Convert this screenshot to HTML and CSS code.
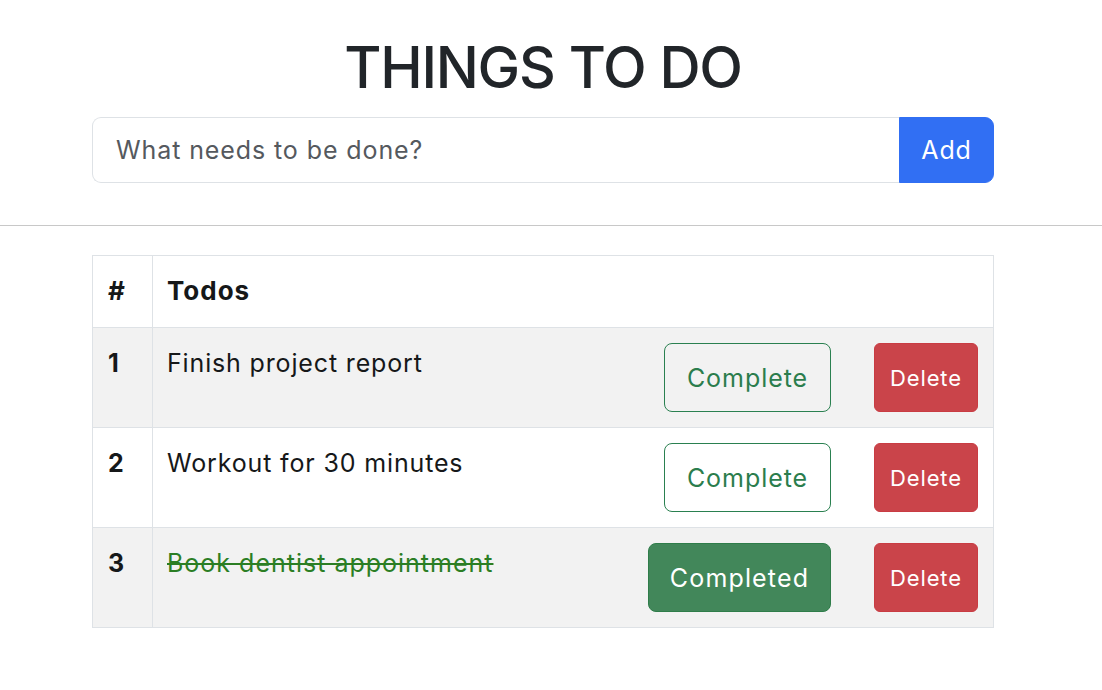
FILE: index.html
```html
<!DOCTYPE html>
<html lang="en">
<head>
<meta charset="utf-8">
<title>Things to do</title>
<link rel="stylesheet" href="styles.css">
</head>
<body>
<header class="top">
  <h1 class="title">THINGS TO DO</h1>
  <form class="add-form">
    <input class="add-input" type="text" placeholder="What needs to be done?">
    <button class="add-btn" type="button">Add</button>
  </form>
</header>
<hr class="divider">
<table class="todos">
  <thead>
    <tr><th class="num">#</th><th class="head-todos">Todos</th></tr>
  </thead>
  <tbody>
    <tr class="odd">
      <td class="num">1</td>
      <td><div class="todo-cell"><span class="todo-text">Finish project report</span><div class="actions"><button class="btn-complete" type="button">Complete</button><button class="btn-delete" type="button">Delete</button></div></div></td>
    </tr>
    <tr>
      <td class="num">2</td>
      <td><div class="todo-cell"><span class="todo-text">Workout for 30 minutes</span><div class="actions"><button class="btn-complete" type="button">Complete</button><button class="btn-delete" type="button">Delete</button></div></div></td>
    </tr>
    <tr class="odd">
      <td class="num">3</td>
      <td><div class="todo-cell"><span class="todo-text done">Book dentist appointment</span><div class="actions"><button class="btn-completed" type="button">Completed</button><button class="btn-delete" type="button">Delete</button></div></div></td>
    </tr>
  </tbody>
</table>
</body>
</html>
```

FILE: styles.css
```css
* { box-sizing: border-box; }

body {
  margin: 0;
  font-family: Inter, "Liberation Sans", sans-serif;
  color: #212529;
  background: #fff;
  font-size: 25px;
  letter-spacing: 0.85px;
}

.top {
  width: 902px;
  margin-left: 92px;
  padding-top: 34px;
}

.title {
  margin: 0;
  text-align: center;
  font-size: 57px;
  font-weight: 500;
  line-height: 68px;
  letter-spacing: -1.2px;
  color: #212529;
}

.add-form {
  display: flex;
  height: 66px;
  margin: 15px 0 0;
}

.add-input {
  flex: 1;
  height: 66px;
  border: 1px solid #dee2e6;
  border-right: none;
  border-radius: 9px 0 0 9px;
  padding: 0 23px;
  font-family: inherit;
  font-size: 25px;
  letter-spacing: 0.9px;
  color: #212529;
  outline: none;
}

.add-input::placeholder { color: #55595e; }

.add-btn {
  width: 95px;
  height: 66px;
  border: 1px solid #316ff3;
  background: #316ff3;
  color: #fff;
  border-radius: 0 9px 9px 0;
  font-family: inherit;
  font-size: 25px;
  letter-spacing: 0.85px;
  padding: 0;
}

.divider {
  margin: 42px 0 0;
  border: none;
  border-top: 1px solid #c8c8c8;
  height: 0;
}

.todos {
  margin: 29px 0 0 92px;
  width: 902px;
  border-collapse: collapse;
  border: 1px solid #dee2e6;
  color: #161819;
}

.todos th,
.todos td {
  border: 1px solid #dee2e6;
  padding: 15px 15px 15px 14px;
  text-align: left;
  vertical-align: top;
  line-height: 36px;
}

.todos th {
  font-weight: 700;
  font-size: 26px;
  padding-top: 17px;
  padding-bottom: 18px;
  letter-spacing: 1px;
}

.todos .num {
  width: 60px;
  font-weight: 700;
  padding-left: 15px;
}

.todos td.num { padding-top: 17px; }

.todos tr.odd td { background: #f2f2f2; }

.todo-cell {
  display: flex;
  align-items: flex-start;
}

.todo-text {
  flex: 1;
  padding-top: 2px;
}

.todo-text.done {
  color: #2b7e24;
  text-decoration: line-through;
  letter-spacing: 1px;
}

.actions {
  display: flex;
  gap: 43px;
}

.actions button {
  height: 69px;
  font-family: inherit;
  padding: 0;
  cursor: pointer;
}

.btn-complete {
  width: 167px;
  border: 1px solid #2a8050;
  border-radius: 8px;
  background: transparent;
  color: #2b7d4d;
  font-size: 25px;
  letter-spacing: 0.95px;
}

.btn-completed {
  width: 183px;
  border: 1px solid #2f7d4a;
  border-radius: 8px;
  background: #42875a;
  color: #fff;
  font-size: 25px;
  letter-spacing: 1.15px;
}

.btn-delete {
  width: 104px;
  border: 1px solid #c93c43;
  border-radius: 6px;
  background: #ca444a;
  color: #fff;
  font-size: 22px;
  letter-spacing: 0.85px;
}
```
